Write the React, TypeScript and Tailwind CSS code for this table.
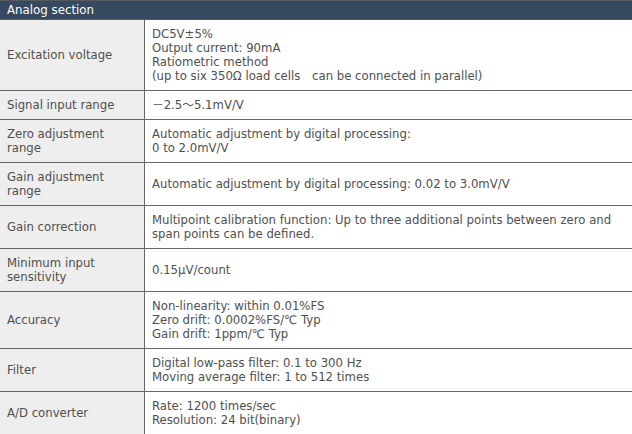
const rows: { label: string[]; value: string[] }[] = [
  {
    label: ["Excitation voltage"],
    value: [
      "DC5V±5%",
      "Output current: 90mA",
      "Ratiometric method",
      "(up to six 350Ω load cells\u3000can be connected in parallel)",
    ],
  },
  { label: ["Signal input range"], value: ["－2.5～5.1mV/V"] },
  {
    label: ["Zero adjustment", "range"],
    value: ["Automatic adjustment by digital processing:", "0 to 2.0mV/V"],
  },
  {
    label: ["Gain adjustment", "range"],
    value: ["Automatic adjustment by digital processing: 0.02 to 3.0mV/V"],
  },
  {
    label: ["Gain correction"],
    value: [
      "Multipoint calibration function: Up to three additional points between zero and",
      "span points can be defined.",
    ],
  },
  { label: ["Minimum input", "sensitivity"], value: ["0.15μV/count"] },
  {
    label: ["Accuracy"],
    value: [
      "Non-linearity: within 0.01%FS",
      "Zero drift: 0.0002%FS/℃ Typ",
      "Gain drift: 1ppm/℃ Typ",
    ],
  },
  {
    label: ["Filter"],
    value: ["Digital low-pass filter: 0.1 to 300 Hz", "Moving average filter: 1 to 512 times"],
  },
  {
    label: ["A/D converter"],
    value: ["Rate: 1200 times/sec", "Resolution: 24 bit(binary)"],
  },
];

export default function App() {
  return (
    <div
      className="w-[632px] h-[434px] overflow-hidden bg-white text-[11.7px] leading-[14px] text-[#4f4f4f]"
      style={{ fontFamily: '"DejaVu Sans", "Noto Sans CJK JP", sans-serif' }}
    >
      <div className="h-[20px] border-t border-b border-[#5a5a5a] bg-[#36495e] pl-[7px] text-[11.8px] leading-[18px] text-white">
        Analog section
      </div>
      {rows.map((row, i) => (
        <div key={i} className="flex border-b border-[#666]">
          <div className="flex w-[145px] shrink-0 flex-col justify-center border-r border-[#666] bg-[#eeeeee] px-[7px] py-[7px]">
            {row.label.map((l, j) => (
              <div key={j} className="whitespace-nowrap">{l}</div>
            ))}
          </div>
          <div className="flex flex-1 flex-col justify-center px-[7px] py-[7px]">
            {row.value.map((v, j) => (
              <div key={j} className="whitespace-pre">{v}</div>
            ))}
          </div>
        </div>
      ))}
    </div>
  );
}
